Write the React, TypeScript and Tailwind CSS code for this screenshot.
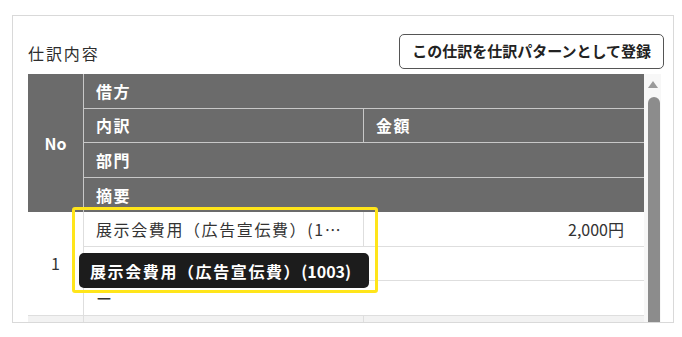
export default function App() {
  const font = { fontFamily: '"Noto Sans CJK JP", "Noto Sans", sans-serif' };
  return (
    <div className="w-[682px] h-[337px] bg-white pt-[15px] pl-[12px]" style={font}>
      <div className="relative w-[662px] h-[308px] border border-[#d9d9d9] overflow-hidden pt-[18px] pl-[15px] pr-[9px]">
        <div className="flex items-center justify-between">
          <div className="text-[16px] tracking-[0.12em] text-[#2e2e2e] pt-[2px]">仕訳内容</div>
          <button
            type="button"
            className="h-[35px] rounded-[5px] border border-[#555] bg-white px-[12px] text-[15px] font-bold text-[#222]"
          >
            この仕訳を仕訳パターンとして登録
          </button>
        </div>

        <div className="mt-[5px] flex">
          <div className="w-[616px] text-[16px] tracking-[0.1em]">
            <div className="grid grid-cols-[56px_280px_280px] bg-[#6b6b6b] font-bold text-white">
              <div className="row-span-4 flex items-center justify-center border-r border-[#c8c8c8] tracking-normal">No</div>
              <div className="col-span-2 h-[34.5px] flex items-center px-[12px] border-b border-[#c8c8c8]">借方</div>
              <div className="h-[34.5px] flex items-center px-[12px] border-b border-r border-[#c8c8c8]">内訳</div>
              <div className="h-[34.5px] flex items-center px-[12px] border-b border-[#c8c8c8]">金額</div>
              <div className="col-span-2 h-[34.5px] flex items-center px-[12px] border-b border-[#c8c8c8]">部門</div>
              <div className="col-span-2 h-[34.5px] flex items-center px-[12px]">摘要</div>
            </div>
            <div className="grid grid-cols-[56px_280px_280px] text-[#333]">
              <div className="row-span-3 flex items-center justify-center border-r border-b border-[#dedede] tracking-normal">1</div>
              <div className="h-[34.5px] flex items-center px-[12px] border-b border-r border-[#dedede] whitespace-nowrap overflow-hidden">
                展示会費用（広告宣伝費）(1…
              </div>
              <div className="h-[34.5px] flex items-center justify-end pr-[20px] border-b border-[#dedede] tracking-normal">2,000円</div>
              <div className="col-span-2 h-[34.5px] border-b border-[#dedede]"></div>
              <div className="col-span-2 h-[34.5px] flex items-center px-[12px] border-b border-[#dedede]">ー</div>
            </div>
            <div className="grid grid-cols-[56px_280px_280px] bg-[#f2f2f2] h-[34px]">
              <div className="border-r border-[#dedede]"></div>
              <div className="border-r border-[#dedede]"></div>
              <div></div>
            </div>
          </div>
          <div className="w-[17px] bg-[#f7f7f7] flex flex-col items-center">
            <div className="mt-[7px] w-0 h-0 border-l-[5px] border-r-[5px] border-b-[7px] border-l-transparent border-r-transparent border-b-[#9a9a9a]"></div>
            <div className="mt-[9px] ml-[2px] w-[12px] h-[240px] rounded-t-full bg-[#8c8c8c]"></div>
          </div>
        </div>

        <div className="absolute left-[59px] top-[191px] w-[306px] h-[86px] rounded-[3px] border-[3px] border-[#ffe51a]"></div>
        <div className="absolute left-[66px] top-[237px] h-[35px] w-[290px] rounded-[5px] bg-[#1c1c1c] px-[11px] flex items-center text-[16px] tracking-[0.1em] font-bold text-white whitespace-nowrap">
          展示会費用（広告宣伝費）<span className="tracking-normal">(1003)</span>
        </div>
      </div>
    </div>
  );
}
